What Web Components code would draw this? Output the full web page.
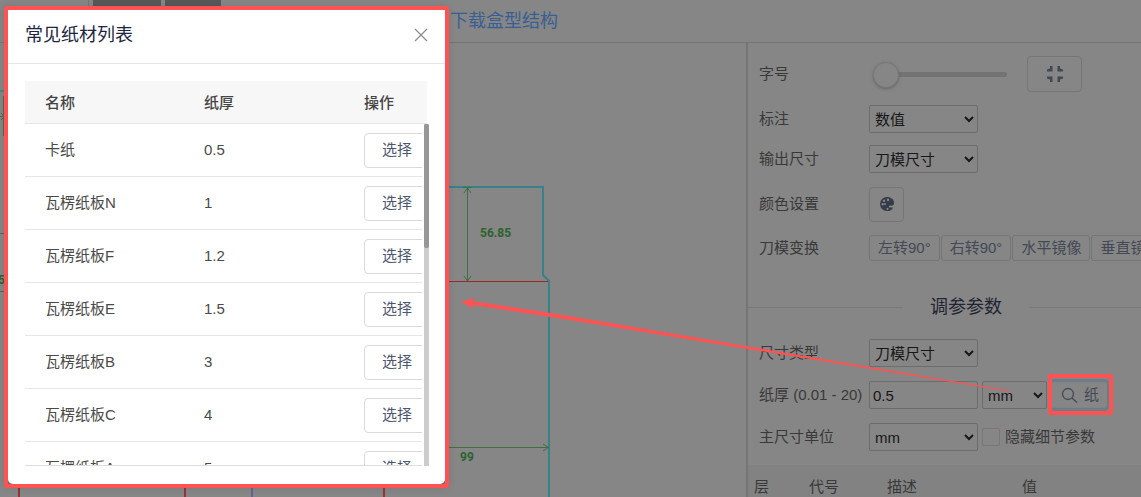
<!DOCTYPE html>
<html lang="zh-CN">
<head>
<meta charset="utf-8">
<title>盒型结构</title>
<style>
html, body { margin: 0; height: 100%; overflow: hidden; background: #868686; }
body { font: 15px/20px "Liberation Sans", "Noto Sans CJK SC", sans-serif; color: #393939; }
</style>
</head>
<body>
<box-editor></box-editor>

<template id="t-editor">
<style>
:host { display: flex; flex-direction: column; height: 100%; position: relative; overflow: hidden; }
main { display: flex; flex: 1; min-height: 0; }
die-canvas { flex: 1; min-width: 0; }
side-panel { flex: 0 0 393px; }
paper-dialog { position: absolute; left: 4px; top: 6px; }
.pointer { position: absolute; left: 0; top: 0; width: 100%; height: 100%; pointer-events: none; }
</style>
<top-bar></top-bar>
<main><die-canvas></die-canvas><side-panel></side-panel></main>
<paper-dialog></paper-dialog>
<svg class="pointer" aria-hidden="true"><path fill="#ff5252" d="M461 302 L475 297.500 L472 301 L560 314.500 L1009 390.500 V391.500 L560 318.500 L472 305 L474 309 Z"/></svg>
</template>

<template id="t-top">
<style>
:host { display: flex; height: 42px; border-bottom: 1px solid #757575; position: relative; align-items: center; }
a { margin-left: 450px; font-size: 18px; line-height: 24px; color: #385f93; text-decoration: none; white-space: nowrap; }
.tabs { position: absolute; left: 88px; top: 0; height: 8px; display: flex; gap: 4px; border-left: 1px solid #757575; padding-left: 4px; }
.tabs i { background: #585858; width: 68px; }
.tabs i + i { width: 56px; }
</style>
<div class="tabs"><i></i><i></i></div>
<a href="#download">下载盒型结构</a>
</template>

<template id="t-canvas">
<style>
:host { display: block; overflow: hidden; }
svg { display: block; width: 746px; height: 454px; }
text { font: bold 12px Roboto, sans-serif; fill: #2c622e; }
</style>
<svg viewBox="0 43 746 454" fill="none" aria-label="刀模图">
<path stroke="#37818b" stroke-width="2" d="M440 187H543V275L549 281V497"/>
<path stroke="#3f7042" d="M467.500 187V281M463 187.500H472M463 281.500H472M464 193L467.500 188L471 193M464 276L467.500 281L471 276M440 447.500H549M543 444L548.500 447.500L543 451"/>
<path stroke="#9a2a2a" stroke-width="1" d="M440 281.500H548"/>
<text x="480" y="237">56.85</text>
<text x="460" y="461">99</text>
<path stroke="#963434" stroke-width="2" d="M19 480V497M185 480V497M384 480V497"/>
<path stroke="#65609a" stroke-width="2" d="M252 480V497"/>
<path stroke="#47868c" stroke-width="2" d="M0 91H5"/>
<path stroke="#4c6c4e" d="M0 116.500H5M1 113L4 116.500L1 120M3.500 96V136M0 233.500H5M0 291.500H5"/>
<text x="-2" y="284">5</text>
</svg>
</template>

<template id="t-row">
<style>
:host { display: flex; align-items: center; height: 42px; padding-left: 11px; white-space: nowrap; }
.label { flex: 0 0 110px; }
.field { display: flex; align-items: center; gap: var(--gap, 4px); }
</style>
<div class="label"><slot name="label"></slot></div>
<div class="field"><slot></slot></div>
</template>

<template id="t-panel">
<style>
:host { display: block; border-left: 2px solid #757575; overflow: hidden; }
select, input, button { font: inherit; box-sizing: border-box; background: transparent; margin: 0; }
select, .num { width: 109px; height: 28px; border: 1px solid #6c6c6c; border-radius: 2px; color: #171717; padding: 0 1px; }
.num { padding: 0 3px; }
select.unit { width: 65px; }
button { border: 1px solid #757575; border-radius: 4px; color: #434954; padding: 0; }
svg { display: block; }
.size { height: 62px; --gap: 20px; }
.mark { height: 28px; }
.out { height: 52px; }
.color { height: 38px; }
.turn { height: 50px; --gap: 1px; }
.turn button { height: 26px; padding: 0 8px; border-radius: 3px; }
.shrink { width: 55px; height: 36px; display: grid; place-items: center; }
.palette { width: 35px; height: 35px; display: grid; place-items: center; }
input[type=range] { appearance: none; width: 134px; height: 26px; margin-left: 4px; }
input[type=range]::-webkit-slider-runnable-track { height: 5px; border-radius: 3px; background: #737373; }
input[type=range]::-webkit-slider-thumb { appearance: none; width: 26px; height: 26px; margin-top: -10px; border-radius: 50%; background: #868686; border: 1px solid #787878; box-shadow: 0 1px 3px #666; }
h2 { display: flex; align-items: center; gap: 27px; margin: 0; padding: 22px 0 13px; font-size: 18px; line-height: 24px; font-weight: 400; color: #202431; }
h2::before, h2::after { content: ""; height: 1px; background: #797979; flex: 0 0 155px; }
h2::after { flex: 1; }
.pick { position: relative; width: 56px; height: 26px; display: flex; align-items: center; justify-content: center; gap: 6px; padding-left: 2px; border-radius: 3px; box-shadow: 0 0 0 3px #6f7c86; border-color: #7c858c; }
.pick::after { content: ""; position: absolute; inset: -9px -7px -8px -4px; border: 4px solid #ff5252; border-radius: 2px; }
input[type=checkbox] { appearance: none; width: 18px; height: 18px; border: 1px solid #777; border-radius: 2px; margin-right: 1px; }
table { border-collapse: collapse; table-layout: fixed; width: 100%; margin-top: 7px; background: #828282; }
th { font-weight: 400; text-align: left; padding: 12px 6px; }
</style>
<form-row class="size"><label slot="label" for="fs">字号</label><input id="fs" type="range" value="0"><button class="shrink" aria-label="收缩"><svg width="16" height="16" fill="#3f4853"><path d="M0 3.500L3 2.500V0H5.500V5.500H0ZM16 3.500L13 2.500V0H10.500V5.500H16ZM0 12.500L3 13.500V16H5.500V10.500H0ZM16 12.500L13 13.500V16H10.500V10.500H16Z"/></svg></button></form-row>
<form-row class="mark"><label slot="label" for="mk">标注</label><select id="mk"><option>数值</option></select></form-row>
<form-row class="out"><label slot="label" for="ot">输出尺寸</label><select id="ot"><option>刀模尺寸</option></select></form-row>
<form-row class="color"><span slot="label">颜色设置</span><button class="palette" aria-label="颜色设置"><svg width="14" height="14" viewBox="0 0 14 14"><path fill="#353c49" fill-rule="evenodd" d="M7 0C11 0 14 2.500 14 6C14 8 12.500 9 10.500 8.600C9 8.400 8.500 9.400 9.200 10.400H13C12 13 10 14 7 14A7 7 0 0 1 7 0ZM4 2.500a1.200 1.200 0 1 0 .01 0ZM8 1.600a1.200 1.200 0 1 0 .01 0ZM2.600 6a1.200 1.200 0 1 0 .01 0ZM5 6a1 1 0 1 0 .01 0ZM7.500 10.800a1 1 0 1 0 .01 0Z"/></svg></button></form-row>
<form-row class="turn"><span slot="label">刀模变换</span><button>左转90°</button><button>右转90°</button><button>水平镜像</button><button>垂直镜像</button></form-row>
<h2>调参参数</h2>
<form-row><label slot="label" for="ty">尺寸类型</label><select id="ty"><option>刀模尺寸</option></select></form-row>
<form-row><label slot="label" for="th">纸厚 (0.01 - 20)</label><input id="th" class="num" value="0.5"><select class="unit" aria-label="纸厚单位"><option>mm</option></select><button class="pick"><svg width="17" height="17" fill="none" stroke="#434954" stroke-width="1.300"><circle cx="7" cy="7" r="5.500"/><path d="M11 11L16 15.500"/></svg>纸</button></form-row>
<form-row><label slot="label" for="un">主尺寸单位</label><select id="un"><option>mm</option></select><input id="hd" type="checkbox"><label for="hd">隐藏细节参数</label></form-row>
<table><colgroup><col style="width:55px"><col style="width:78px"><col style="width:135px"><col></colgroup><thead><tr><th>层</th><th>代号</th><th>描述</th><th>值</th></tr></thead></table>
</template>

<template id="t-dialog">
<style>
:host { display: block; width: 437px; border: 4px solid #ff5252; border-radius: 3px; background: #6b6b6b; box-shadow: 0 0 8px #00000018; color: #4a4a4a; }
section { background: #fff; border-radius: 0 0 5px 5px; }
header { display: flex; align-items: center; justify-content: space-between; height: 53px; box-sizing: content-box; padding: 0 17px; border-bottom: 1px solid #e6e6e6; }
h1 { margin: 0; padding-bottom: 4px; font-size: 18px; line-height: 24px; font-weight: 400; color: #1d2540; }
.close { border: 0; padding: 0; background: none; display: block; margin-top: -4px; }
svg { display: block; }
.body { padding: 17px 18px 18px 17px; }
.list { position: relative; }
.clip { height: 384px; overflow: hidden; border-bottom: 1px solid #ddd; }
table { width: 100%; table-layout: fixed; border-collapse: separate; border-spacing: 0; }
th, td { box-sizing: border-box; text-align: left; padding: 0 0 0 20px; border-bottom: 1px solid #e6e6e6; }
th { height: 43px; padding-top: 2px; background: #f7f7f7; font-weight: 500; color: #444; }
td { height: 53px; }
td button { display: block; width: 66px; height: 35px; border: 1px solid #d8dadf; border-radius: 4px; background: #fff; font: inherit; color: #4d566d; padding: 0; }
td:last-child { overflow: hidden; }
.bar { position: absolute; right: -2px; top: 43px; bottom: 0; width: 5px; border-left: 2px solid #fff; background: #ccc; }
.bar i { display: block; height: 124px; background: #979797; border-radius: 2px; }
</style>
<section role="dialog" aria-label="常见纸材列表">
<header><h1>常见纸材列表</h1><button class="close" aria-label="关闭"><svg width="14" height="14" stroke="#8d8d8d" stroke-width="1.300"><path d="M1 1L13 13M13 1L1 13"/></svg></button></header>
<div class="body"><div class="list">
<div class="clip"><table><colgroup><col style="width:159px"><col style="width:160px"><col></colgroup><thead><tr><th>名称</th><th>纸厚</th><th>操作</th></tr></thead><tbody></tbody></table></div>
<div class="bar"><i></i></div>
</div></div>
</section>
</template>

<script>
function define(name, templateId, setup) {
  customElements.define(name, class extends HTMLElement {
    constructor() {
      super();
      const root = this.attachShadow({ mode: "open" });
      root.append(document.getElementById(templateId).content.cloneNode(true));
      if (setup) setup(root);
    }
  });
}
const papers = [["卡纸", "0.5"], ["瓦楞纸板N", "1"], ["瓦楞纸板F", "1.2"], ["瓦楞纸板E", "1.5"], ["瓦楞纸板B", "3"], ["瓦楞纸板C", "4"], ["瓦楞纸板A", "5"]];
define("form-row", "t-row");
define("top-bar", "t-top");
define("die-canvas", "t-canvas");
define("side-panel", "t-panel");
define("paper-dialog", "t-dialog", root => {
  const body = root.querySelector("tbody");
  for (const [name, thickness] of papers) {
    const row = body.insertRow();
    row.insertCell().textContent = name;
    row.insertCell().textContent = thickness;
    const button = document.createElement("button");
    button.textContent = "选择";
    row.insertCell().append(button);
  }
});
define("box-editor", "t-editor");
</script>
</body>
</html>
